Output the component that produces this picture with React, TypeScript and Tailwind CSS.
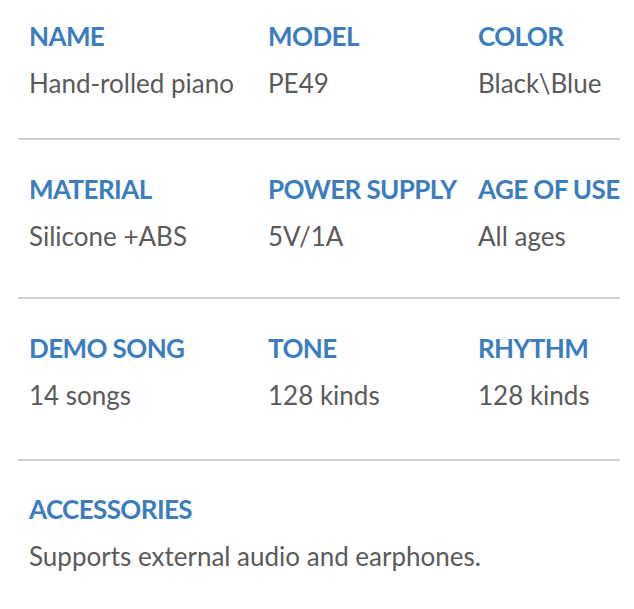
import React from 'react';

type Spec = { label: string; value: string };

const rows: Spec[][] = [
  [
    { label: 'NAME', value: 'Hand-rolled piano' },
    { label: 'MODEL', value: 'PE49' },
    { label: 'COLOR', value: 'Black\\Blue' }
  ],
  [
    { label: 'MATERIAL', value: 'Silicone +ABS' },
    { label: 'POWER SUPPLY', value: '5V/1A' },
    { label: 'AGE OF USE', value: 'All ages' }
  ],
  [
    { label: 'DEMO SONG', value: '14 songs' },
    { label: 'TONE', value: '128 kinds' },
    { label: 'RHYTHM', value: '128 kinds' }
  ]
];

// per-row spacing, taken from the screenshot
const rowPad = ['pt-[20px] pb-[39px]', 'pt-[33px] pb-[45px]', 'pt-[33px] pb-[48px]'];

const Cell = ({ label, value }: Spec) => (
  <div className="flex flex-col gap-[15px] whitespace-nowrap">
    <div className="text-[26px] leading-[32px] font-bold text-[#3b7dbf] tracking-[-0.6px]">
      {label}
    </div>
    <div className="text-[26px] leading-[32px] text-[#5a5a5a]">{value}</div>
  </div>
);

export default function App() {
  return (
    <div
      className="w-[634px] h-[609px] bg-white pl-[18px] pr-[14px] overflow-hidden"
      style={{ fontFamily: 'Lato, "Noto Sans", sans-serif' }}
    >
      {rows.map((row, i) => (
        <div
          key={i}
          className={`grid grid-cols-[239px_210px_1fr] pl-[11px] border-b-2 border-[#d0d0d0] ${rowPad[i]}`}
        >
          {row.map((c) => (
            <Cell key={c.label} {...c} />
          ))}
        </div>
      ))}
      <div className="pl-[11px] pt-[32px]">
        <Cell label="ACCESSORIES" value="Supports external audio and earphones." />
      </div>
    </div>
  );
}
